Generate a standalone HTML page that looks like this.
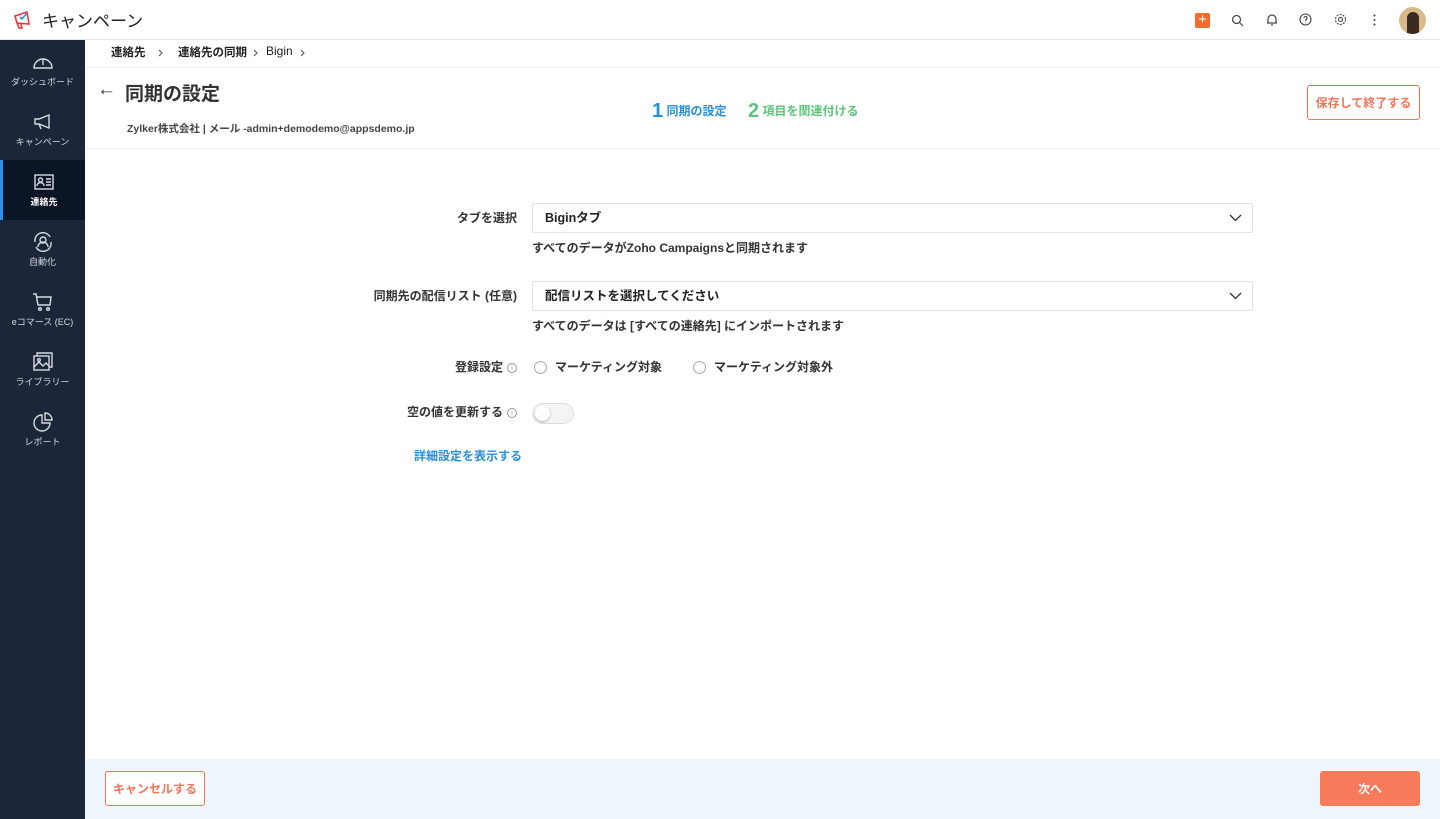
<!DOCTYPE html>
<html><head><meta charset="utf-8"><style>
*{box-sizing:border-box;margin:0;padding:0}
body{width:1440px;height:819px;overflow:hidden;font-family:"Liberation Sans","Noto Sans CJK JP",sans-serif;background:#fff;color:#333;position:relative}
.top{position:absolute;left:0;top:0;width:1440px;height:40px;border-bottom:1px solid #e6e6e6;background:#fff}
.side{position:absolute;left:0;top:40px;width:85px;height:779px;background:#1b2638}
.nav{height:60px;display:flex;flex-direction:column;align-items:center;justify-content:center;color:#d5dbe3;font-size:9px;gap:3px}
.nav.act{background:#0c1525;border-left:3px solid #2f8fe6;color:#fff;font-weight:bold}
.nav svg{width:22px;height:20px;stroke:#d5dbe3;fill:none;stroke-width:1.4}
.abs{position:absolute}
.sel{position:absolute;left:532px;width:721px;height:30px;border:1px solid #e2e2e2;border-radius:2px;font-size:12.5px;padding:0 12px;line-height:28px;color:#222;font-weight:bold}
.lbl{position:absolute;right:923px;font-size:12px;color:#333;text-align:right;white-space:nowrap;font-weight:bold}
.help{position:absolute;left:532px;font-size:12px;color:#333;font-weight:bold}
.radio{display:inline-block;width:13px;height:13px;border:1px solid #aaa;border-radius:50%;vertical-align:middle;margin-right:8px}
.info{display:inline-block;width:10px;height:10px;border:1px solid #999;border-radius:50%;font-size:7px;text-align:center;line-height:9px;color:#999;margin-left:4px;vertical-align:1px;font-weight:normal}
.btn{position:absolute;display:flex;align-items:center;justify-content:center;border-radius:3px;font-size:12px;font-weight:bold}
</style></head><body>
<div class="top">
 <svg class="abs" style="left:12px;top:10px" width="22" height="20" viewBox="0 0 22 20"><path d="M3 6 L15 2 L17 14 L5 13 Z M5 13 L7 18 L10 18 L9 14" fill="none" stroke="#e8373d" stroke-width="1.6"/><path d="M8 7 L10 9 L15 3" fill="none" stroke="#2f8fe6" stroke-width="1.6"/></svg>
 <div class="abs" style="left:42px;top:7px;font-size:17px;color:#222">キャンペーン</div>
 <div class="abs" style="left:1195px;top:13px;width:15px;height:15px;background:#f66b2b;border-radius:2px;color:#fff;font-size:15px;line-height:14px;text-align:center">+</div>
 <svg class="abs" style="left:1231px;top:14px" width="13" height="13" viewBox="0 0 13 13" fill="none" stroke="#444" stroke-width="1.2"><circle cx="5.5" cy="5.5" r="4"/><path d="M8.5 8.5 L12 12"/></svg>
 <svg class="abs" style="left:1266px;top:13px" width="12" height="14" viewBox="0 0 12 14" fill="none" stroke="#444" stroke-width="1.2"><path d="M2 10 V6 a4 4 0 0 1 8 0 V10 H1 H11 M5 12 h2"/></svg>
 <svg class="abs" style="left:1299px;top:13px" width="13" height="13" viewBox="0 0 13 13" fill="none" stroke="#444" stroke-width="1.1"><circle cx="6.5" cy="6.5" r="5.5"/><path d="M5 5 a1.5 1.5 0 1 1 2 1.4 V8 M6.5 9.5 v.8"/></svg>
 <svg class="abs" style="left:1334px;top:13px" width="13" height="13" viewBox="0 0 13 13" fill="none" stroke="#444" stroke-width="1.1"><circle cx="6.5" cy="6.5" r="2"/><circle cx="6.5" cy="6.5" r="5" stroke-dasharray="2 1.2"/></svg>
 <svg class="abs" style="left:1373px;top:14px" width="3" height="12" viewBox="0 0 3 12" fill="#444"><circle cx="1.5" cy="1.5" r="1"/><circle cx="1.5" cy="6" r="1"/><circle cx="1.5" cy="10.5" r="1"/></svg>
 <div class="abs" style="left:1399px;top:7px;width:27px;height:27px;border-radius:50%;background:#d9b98a;overflow:hidden"><div style="margin:5px auto 0;width:12px;height:22px;background:#3a2a20;border-radius:6px 6px 0 0"></div></div>
</div>
<div class="side">
 <div class="nav"><svg viewBox="0 0 22 20"><path d="M2 16 a9 9 0 1 1 18 0 Z M11 7 v6"/></svg>ダッシュボード</div>
 <div class="nav"><svg viewBox="0 0 22 20"><path d="M3 7 h4 l10-4 v13 l-10-4 h-4 Z M7 12 l2 5"/></svg>キャンペーン</div>
 <div class="nav act"><svg viewBox="0 0 22 20"><rect x="2" y="3" width="18" height="14"/><circle cx="7.5" cy="8" r="2"/><path d="M4 14 a3.5 3.5 0 0 1 7 0 M13 7h5 M13 10h5 M13 13h5"/></svg>連絡先</div>
 <div class="nav"><svg viewBox="0 0 22 20"><circle cx="11" cy="8" r="3"/><path d="M6 15 a5 5 0 0 1 10 0 M3 10 a8 8 0 0 1 15-5 M19 10 a8 8 0 0 1 -15 5"/></svg>自動化</div>
 <div class="nav"><svg viewBox="0 0 22 20"><path d="M1 2 h3 l2 11 h12 l1-8 H5"/><circle cx="8" cy="17" r="1.3"/><circle cx="16" cy="17" r="1.3"/></svg>eコマース (EC)</div>
 <div class="nav"><svg viewBox="0 0 22 20"><rect x="2" y="4" width="15" height="14"/><path d="M5 4 V1 h15 v14 h-3 M2 15 l5-5 4 4 3-3 3 3"/><circle cx="7" cy="8" r="1.3"/></svg>ライブラリー</div>
 <div class="nav"><svg viewBox="0 0 22 20"><path d="M10 3 a8 8 0 1 0 8 8 h-8 Z M13 1 a7 7 0 0 1 7 7 h-7 Z"/></svg>レポート</div>
</div>
<div class="abs" style="left:85px;top:40px;width:1355px;height:28px;border-bottom:1px solid #eee;font-size:11.5px;color:#222;font-weight:bold">
 <span class="abs" style="left:26px;top:4px">連絡先</span>
 <svg class="abs" style="left:73px;top:9px" width="5" height="8" viewBox="0 0 5 8" fill="none" stroke="#555" stroke-width="1.1"><path d="M1 1 l3 3 -3 3"/></svg>
 <span class="abs" style="left:93px;top:4px">連絡先の同期</span>
 <svg class="abs" style="left:168px;top:9px" width="5" height="8" viewBox="0 0 5 8" fill="none" stroke="#555" stroke-width="1.1"><path d="M1 1 l3 3 -3 3"/></svg>
 <span class="abs" style="left:181px;top:4px;font-weight:normal;font-size:12px">Bigin</span>
 <svg class="abs" style="left:215px;top:9px" width="5" height="8" viewBox="0 0 5 8" fill="none" stroke="#555" stroke-width="1.1"><path d="M1 1 l3 3 -3 3"/></svg>
</div>
<div class="abs" style="left:97px;top:79px;font-size:19px;color:#333">←</div>
<div class="abs" style="left:125px;top:79px;font-size:19px;font-weight:bold;color:#333">同期の設定</div>
<div class="abs" style="left:127px;top:121px;font-size:10.5px;color:#444;font-weight:bold">Zylker株式会社 | メール -admin+demodemo@appsdemo.jp</div>
<div class="abs" style="left:652px;top:100px;font-size:12px;color:#2a8fd8;font-weight:bold"><span style="font-size:20px;vertical-align:-2px">1</span> 同期の設定</div>
<div class="abs" style="left:748px;top:100px;font-size:12px;color:#5cc47a;font-weight:bold"><span style="font-size:20px;vertical-align:-2px">2</span> 項目を関連付ける</div>
<div class="btn" style="left:1307px;top:85px;width:113px;height:35px;border:1px solid #f0765a;color:#f0765a">保存して終了する</div>
<div class="abs" style="left:85px;top:148px;width:1355px;border-top:1px solid #eee"></div>

<div class="lbl" style="top:209px">タブを選択</div>
<div class="sel" style="top:203px">Biginタブ<svg class="abs" style="right:10px;top:10px" width="13" height="8" viewBox="0 0 13 8" fill="none" stroke="#333" stroke-width="1.3"><path d="M1 1 l5.5 5.5 5.5-5.5"/></svg></div>
<div class="help" style="top:239px">すべてのデータがZoho Campaignsと同期されます</div>
<div class="lbl" style="top:287px">同期先の配信リスト (任意)</div>
<div class="sel" style="top:281px">配信リストを選択してください<svg class="abs" style="right:10px;top:10px" width="13" height="8" viewBox="0 0 13 8" fill="none" stroke="#333" stroke-width="1.3"><path d="M1 1 l5.5 5.5 5.5-5.5"/></svg></div>
<div class="help" style="top:317px">すべてのデータは [すべての連絡先] にインポートされます</div>
<div class="lbl" style="top:358px;right:923px">登録設定<span class="info">i</span></div>
<div class="abs" style="left:534px;top:358px;font-size:12px;font-weight:bold"><span class="radio"></span>マーケティング対象</div>
<div class="abs" style="left:693px;top:358px;font-size:12px;font-weight:bold"><span class="radio"></span>マーケティング対象外</div>
<div class="lbl" style="top:403px">空の値を更新する<span class="info">i</span></div>
<div class="abs" style="left:532px;top:403px;width:42px;height:21px;border:1px solid #ddd;border-radius:11px;background:#f4f4f4"><div style="margin:2px;width:15px;height:15px;border-radius:50%;background:#fff;box-shadow:0 1px 2px rgba(0,0,0,.3)"></div></div>
<div class="abs" style="left:414px;top:447px;font-size:12px;color:#2a8fd8;font-weight:bold">詳細設定を表示する</div>

<div class="abs" style="left:85px;top:759px;width:1355px;height:60px;background:#eef6fd"></div>
<div class="btn" style="left:105px;top:771px;width:100px;height:35px;border:1px solid #f0765a;background:#fff;color:#f0765a">キャンセルする</div>
<div class="btn" style="left:1320px;top:771px;width:100px;height:35px;background:#f77a5a;color:#fff">次へ</div>
</body></html>
